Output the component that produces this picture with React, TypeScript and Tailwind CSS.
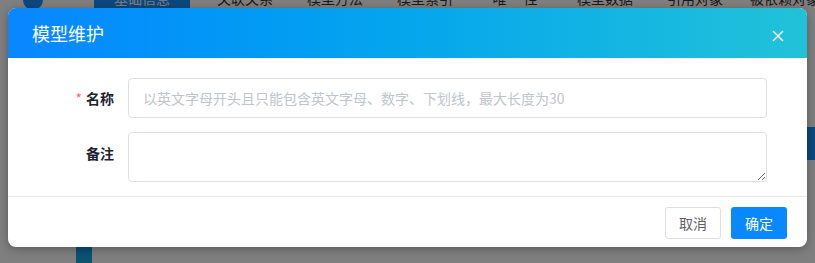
import React from "react"

const tabs = ["关联关系", "模型方法", "模型索引", "唯 一性", "模型数据", "引用对象", "被依赖对象"]

export default function App() {
  const cjk = { fontFamily: '"Noto Sans CJK SC", "Noto Sans", sans-serif' }

  return (
    <div className="relative w-[815px] h-[263px] overflow-hidden bg-white" style={cjk}>
      {/* page behind the dialog */}
      <div className="flex items-start h-[40px] -mt-[12px] pl-[23px] text-[14px] text-[#333]">
        <div className="shrink-0 w-[20px] h-[20px] rounded-full bg-[#1890ff] mt-[2px]" />
        <div className="shrink-0 ml-[51px] w-[96px] h-[20px] bg-[#1890ff] text-white flex items-center justify-center">基础信息</div>
        <div className="shrink-0 flex ml-[10px]">
          {tabs.map((t) => (
            <div key={t} className="shrink-0 w-[90px] h-[20px] flex items-center justify-center">{t}</div>
          ))}
        </div>
      </div>
      <div className="absolute right-0 top-[127px] w-[8px] h-[33px] bg-[#1890ff]" />
      <div className="absolute left-[76px] top-[240px] w-[16px] h-[30px] bg-gradient-to-b from-[#1890ff] to-[#20b2c8]" />

      {/* mask */}
      <div className="absolute inset-0 bg-black/50" />

      {/* dialog */}
      <div className="absolute left-[8px] top-[8px] w-[799px] rounded-[8px] bg-white overflow-hidden shadow-[0_2px_10px_rgba(0,0,0,0.3)]">
        <div className="h-[50px] flex items-center justify-between pl-[24px] pr-[23px] bg-gradient-to-r from-[#0a86ff] to-[#21c2d8]">
          <span className="text-[18px] text-white leading-none">模型维护</span>
          <svg width="12" height="12" viewBox="0 0 12 12" className="mt-[6px]">
            <path d="M1 1L11 11M11 1L1 11" stroke="white" strokeWidth="1.5" fill="none" />
          </svg>
        </div>

        <div className="pt-[20px] pb-[14px] pr-[40px] flex flex-col gap-[14px]">
          <div className="flex items-center">
            <label className="w-[120px] pr-[14px] text-right text-[14px] font-bold text-[#1f2330]">
              <span className="text-[#f56c6c] mr-[4px] font-normal">*</span>名称
            </label>
            <input
              className="flex-1 h-[40px] rounded-[4px] border border-[#dcdfe6] px-[14px] text-[14px] outline-none placeholder:text-[#c0c4cc]"
              placeholder="以英文字母开头且只能包含英文字母、数字、下划线，最大长度为30"
            />
          </div>
          <div className="flex items-start">
            <label className="w-[120px] pr-[14px] pt-[11px] text-right text-[14px] font-bold text-[#1f2330]">备注</label>
            <textarea className="flex-1 h-[50px] rounded-[4px] border border-[#dcdfe6] px-[15px] py-[5px] text-[14px] outline-none" />
          </div>
        </div>

        <div className="border-t border-[#e4e7ed] pt-[10px] pb-[8px] pr-[20px] flex justify-end gap-[10px]">
          <button className="w-[56px] h-[32px] rounded-[3px] border border-[#dcdfe6] bg-white text-[14px] text-[#606266]">取消</button>
          <button className="w-[56px] h-[32px] rounded-[3px] bg-[#0a88ff] text-[14px] text-white">确定</button>
        </div>
      </div>
    </div>
  )
}
